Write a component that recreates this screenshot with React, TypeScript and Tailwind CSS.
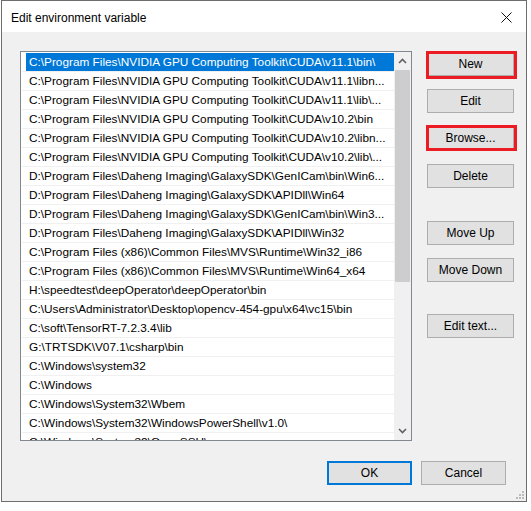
const paths = [
  'C:\\Program Files\\NVIDIA GPU Computing Toolkit\\CUDA\\v11.1\\bin\\',
  'C:\\Program Files\\NVIDIA GPU Computing Toolkit\\CUDA\\v11.1\\libn...',
  'C:\\Program Files\\NVIDIA GPU Computing Toolkit\\CUDA\\v11.1\\lib\\...',
  'C:\\Program Files\\NVIDIA GPU Computing Toolkit\\CUDA\\v10.2\\bin',
  'C:\\Program Files\\NVIDIA GPU Computing Toolkit\\CUDA\\v10.2\\libn...',
  'C:\\Program Files\\NVIDIA GPU Computing Toolkit\\CUDA\\v10.2\\lib\\...',
  'D:\\Program Files\\Daheng Imaging\\GalaxySDK\\GenICam\\bin\\Win6...',
  'D:\\Program Files\\Daheng Imaging\\GalaxySDK\\APIDll\\Win64',
  'D:\\Program Files\\Daheng Imaging\\GalaxySDK\\GenICam\\bin\\Win3...',
  'D:\\Program Files\\Daheng Imaging\\GalaxySDK\\APIDll\\Win32',
  'C:\\Program Files (x86)\\Common Files\\MVS\\Runtime\\Win32_i86',
  'C:\\Program Files (x86)\\Common Files\\MVS\\Runtime\\Win64_x64',
  'H:\\speedtest\\deepOperator\\deepOperator\\bin',
  'C:\\Users\\Administrator\\Desktop\\opencv-454-gpu\\x64\\vc15\\bin',
  'C:\\soft\\TensorRT-7.2.3.4\\lib',
  'G:\\TRTSDK\\V07.1\\csharp\\bin',
  'C:\\Windows\\system32',
  'C:\\Windows',
  'C:\\Windows\\System32\\Wbem',
  'C:\\Windows\\System32\\WindowsPowerShell\\v1.0\\',
  'C:\\Windows\\System32\\OpenSSH\\',
]

const sideButtons = [
  { label: 'New', mt: 'mt-[20px]', marked: 'h-[28px] top-[-1px]' },
  { label: 'Edit', mt: 'mt-[13px]', marked: '' },
  { label: 'Browse...', mt: 'mt-[13px]', marked: 'h-[26px] top-[-1px]' },
  { label: 'Delete', mt: 'mt-[14px]', marked: '' },
  { label: 'Move Up', mt: 'mt-[33px]', marked: '' },
  { label: 'Move Down', mt: 'mt-[13px]', marked: '' },
  { label: 'Edit text...', mt: 'mt-[32px]', marked: '' },
]

const Chevron = ({ up }: { up?: boolean }) => (
  <svg width="9" height="6" viewBox="0 0 9 6">
    <path
      d={up ? 'M1 5 L4.5 1.5 L8 5' : 'M1 1 L4.5 4.5 L8 1'}
      fill="none"
      stroke="#606060"
      strokeWidth="1.6"
    />
  </svg>
)

const App = () => {
  return (
    <div
      className="w-[531px] h-[511px] bg-white text-[12px] text-black"
      style={{ fontFamily: '"Liberation Sans", Arial, sans-serif' }}
    >
      <div className="relative ml-[1px] w-[526px] h-[502px] border border-[#6d6d6d] flex flex-col">
        {/* title bar */}
        <div className="h-[31px] bg-white flex items-center justify-between pl-[9px] pr-[9px]">
          <span className="pt-[2px]">Edit environment variable</span>
          <svg width="11" height="11" viewBox="0 0 11 11" className="mr-[5px] mt-[1px]">
            <path d="M0.5 0.5 L10.5 10.5 M10.5 0.5 L0.5 10.5" stroke="#111" strokeWidth="1" />
          </svg>
        </div>

        <div className="flex-1 bg-[#f0f0f0] flex flex-col">
          <div className="flex">
            {/* list box */}
            <div className="ml-[18px] mt-[19px] w-[392px] h-[390px] border border-[#828790] bg-white flex overflow-hidden">
              <div className="w-[373px] pt-[1px] pl-[1px] overflow-hidden text-[11.8px]">
                {paths.map((p, i) => (
                  <div key={i} className="h-[19px] border-b border-[#f0f0f0]">
                    <div
                      className={
                        'ml-[4px] h-[18px] pl-[3px] leading-[19px] whitespace-nowrap overflow-hidden ' +
                        (i === 0 ? 'bg-[#0078d7] text-white' : '')
                      }
                    >
                      {p}
                    </div>
                  </div>
                ))}
              </div>
              {/* scrollbar */}
              <div className="w-[17px] bg-[#f0f0f0] flex flex-col">
                <div className="h-[18px] flex items-center justify-center">
                  <Chevron up />
                </div>
                <div className="mx-[1px] h-[212px] bg-[#cdcdcd]" />
                <div className="flex-1" />
                <div className="h-[18px] flex items-center justify-center">
                  <Chevron />
                </div>
              </div>
            </div>

            {/* buttons */}
            <div className="ml-[15px] flex flex-col">
              {sideButtons.map((b) => (
                <div key={b.label} className={'relative ' + b.mt}>
                  <button className="w-[87px] h-[24px] bg-[#e1e1e1] border border-[#adadad] leading-[22px]">
                    {b.label}
                  </button>
                  {b.marked && (
                    <div
                      className={
                        'absolute left-[-1px] w-[91px] border-[3px] border-[#ed1c24] ' + b.marked
                      }
                    />
                  )}
                </div>
              ))}
            </div>
          </div>

          {/* ok / cancel */}
          <div className="flex mt-[20px] ml-[325px]">
            <button className="w-[85px] h-[24px] bg-[#e1e1e1] border-2 border-[#0078d7] leading-[20px]">
              OK
            </button>
            <button className="ml-[9px] w-[85px] h-[24px] bg-[#e1e1e1] border border-[#adadad] leading-[22px]">
              Cancel
            </button>
          </div>
        </div>

        {/* size grip */}
        <svg width="9" height="9" viewBox="0 0 9 9" className="absolute right-[2px] bottom-[2px]">
          <rect x="7" y="1" width="2" height="2" fill="#bcbcbc" />
          <rect x="4" y="4" width="2" height="2" fill="#bcbcbc" />
          <rect x="7" y="4" width="2" height="2" fill="#bcbcbc" />
          <rect x="1" y="7" width="2" height="2" fill="#bcbcbc" />
          <rect x="4" y="7" width="2" height="2" fill="#bcbcbc" />
          <rect x="7" y="7" width="2" height="2" fill="#bcbcbc" />
        </svg>
      </div>
    </div>
  )
}

export default App
